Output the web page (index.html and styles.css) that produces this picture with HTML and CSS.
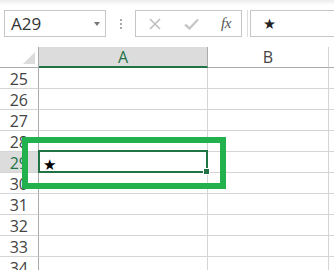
FILE: index.html
```html
<!DOCTYPE html>
<html>
<head>
<meta charset="utf-8">
<link rel="stylesheet" href="styles.css">
</head>
<body>
<div class="app">
  <div class="toolbar">
    <div class="namebox"><span class="name">A29</span><span class="caret"></span></div>
    <div class="grip"><i></i><i></i><i></i></div>
    <div class="fxbox">
      <svg class="ico-x" width="12" height="12" viewBox="0 0 12 12"><path d="M1 1L11 11M11 1L1 11" stroke="#bfbfbf" stroke-width="1.6" fill="none"/></svg>
      <svg class="ico-ok" width="15" height="12" viewBox="0 0 15 12"><path d="M1 6.5L5.5 10.5L14 1.5" stroke="#c8c8c8" stroke-width="2.4" fill="none"/></svg>
      <span class="fx">fx</span>
    </div>
    <div class="split"></div>
    <div class="formula"><span class="fstar">★</span></div>
  </div>
  <div class="sheet">
    <div class="hdr corner"><span class="tri"></span></div>
    <div class="hdr col sel">A</div>
    <div class="hdr col">B</div>
    <div class="hdr col rest"></div>

    <div class="rh">25</div><div class="c"></div><div class="c"></div><div class="c rest"></div>
    <div class="rh">26</div><div class="c"></div><div class="c"></div><div class="c rest"></div>
    <div class="rh">27</div><div class="c"></div><div class="c"></div><div class="c rest"></div>
    <div class="rh">28</div><div class="c"></div><div class="c"></div><div class="c rest"></div>
    <div class="rh sel">29</div><div class="c active"><span class="star">★</span><div class="cursor"><span class="handle"></span></div></div><div class="c"></div><div class="c rest"></div>
    <div class="rh">30</div><div class="c"></div><div class="c"></div><div class="c rest"></div>
    <div class="rh">31</div><div class="c"></div><div class="c"></div><div class="c rest"></div>
    <div class="rh">32</div><div class="c"></div><div class="c"></div><div class="c rest"></div>
    <div class="rh">33</div><div class="c"></div><div class="c"></div><div class="c rest"></div>
    <div class="rh">34</div><div class="c"></div><div class="c"></div><div class="c rest"></div>
  </div>
  <div class="annot"></div>
</div>
</body>
</html>
```

FILE: styles.css
```css
html, body {
  margin: 0;
  padding: 0;
  background: #fff;
  overflow: hidden;
}
body {
  font-family: "Open Sans", "Noto Sans", sans-serif;
  color: #444;
}
.app {
  position: relative;
  width: 334px;
  height: 270px;
  overflow: hidden;
}
.toolbar {
  height: 47px;
  box-sizing: border-box;
  padding: 10px 0 0 4px;
  display: flex;
  align-items: flex-start;
  background: linear-gradient(#ececec 0px, #fff 5px);
}
.namebox {
  width: 102px;
  height: 27px;
  box-sizing: border-box;
  border: 1px solid #c6c6c6;
  background: #fff;
  display: flex;
  align-items: center;
  padding-left: 6px;
}
.name {
  font-size: 17px;
  color: #333;
  flex: 1;
  line-height: 25px;
}
.caret {
  width: 0;
  height: 0;
  border-left: 3.5px solid transparent;
  border-right: 3.5px solid transparent;
  border-top: 4px solid #777;
  margin-right: 5px;
  margin-top: 1px;
}
.grip {
  margin-left: 14px;
  width: 2px;
  height: 27px;
  display: flex;
  flex-direction: column;
  justify-content: center;
  gap: 2px;
}
.grip i {
  display: block;
  width: 2px;
  height: 2px;
  background: #a8a8a8;
}
.fxbox {
  margin-left: 13px;
  width: 107px;
  height: 27px;
  box-sizing: border-box;
  border: 1px solid #c6c6c6;
  background: #fff;
  display: flex;
  align-items: center;
}
.ico-x { margin-left: 13px; }
.ico-ok { margin-left: 23px; }
.fx {
  margin-left: 22px;
  font-family: "Liberation Serif", serif;
  font-style: italic;
  font-size: 15px;
  color: #555;
  letter-spacing: -0.5px;
}
.split {
  margin-left: 5px;
  width: 1px;
  height: 27px;
  background: #dcdcdc;
}
.formula {
  margin-left: 2px;
  flex: 1;
  height: 27px;
  box-sizing: border-box;
  border: 1px solid #c6c6c6;
  border-right: none;
  background: #fff;
  display: flex;
  align-items: center;
}
.fstar {
  margin-left: 12px;
  font-family: "DejaVu Sans", sans-serif;
  font-size: 14.5px;
  color: #222;
}
.sheet {
  display: grid;
  grid-template-columns: 39px 169px 121px 1fr;
  grid-auto-rows: 21px;
}
.hdr {
  box-sizing: border-box;
  background: #fff;
  border-bottom: 1px solid #ababab;
  border-right: 1px solid #d4d4d4;
  font-size: 16px;
  text-align: center;
  line-height: 20px;
  color: #444;
}
.corner {
  position: relative;
  border-right: 1px solid #ababab;
}
.tri {
  position: absolute;
  right: 3px;
  bottom: 3px;
  width: 0;
  height: 0;
  border-left: 12px solid transparent;
  border-bottom: 12px solid #dcdcdc;
}
.col.sel {
  background: #dcdcdc;
  color: #217346;
  border-bottom: 2px solid #217346;
  border-right-color: #ababab;
}
.rest { border-right: none; }
.rh {
  box-sizing: border-box;
  border-right: 1px solid #ababab;
  border-bottom: 1px solid #d4d4d4;
  font-size: 16px;
  line-height: 20px;
  padding-top: 1px;
  text-align: right;
  padding-right: 10px;
  color: #444;
}
.rh.sel {
  background: #dcdcdc;
  color: #217346;
}
.c {
  box-sizing: border-box;
  border-right: 1px solid #d4d4d4;
  border-bottom: 1px solid #d4d4d4;
}
.c.rest { border-right: none; }
.active {
  position: relative;
}
.star {
  position: relative;
  top: 1px;
  margin-left: 4px;
  font-family: "DejaVu Sans", sans-serif;
  font-size: 15px;
  line-height: 20px;
  color: #000;
}
.cursor {
  position: absolute;
  top: -2px;
  left: -1px;
  right: -1px;
  bottom: -1px;
  border: 2px solid #217346;
}
.handle {
  position: absolute;
  right: -4px;
  bottom: -4px;
  width: 5px;
  height: 5px;
  background: #217346;
  border: 1px solid #fff;
}
.annot {
  position: absolute;
  left: 22px;
  top: 137px;
  width: 204px;
  height: 52px;
  box-sizing: border-box;
  border: 6px solid #22b14c;
}
```
